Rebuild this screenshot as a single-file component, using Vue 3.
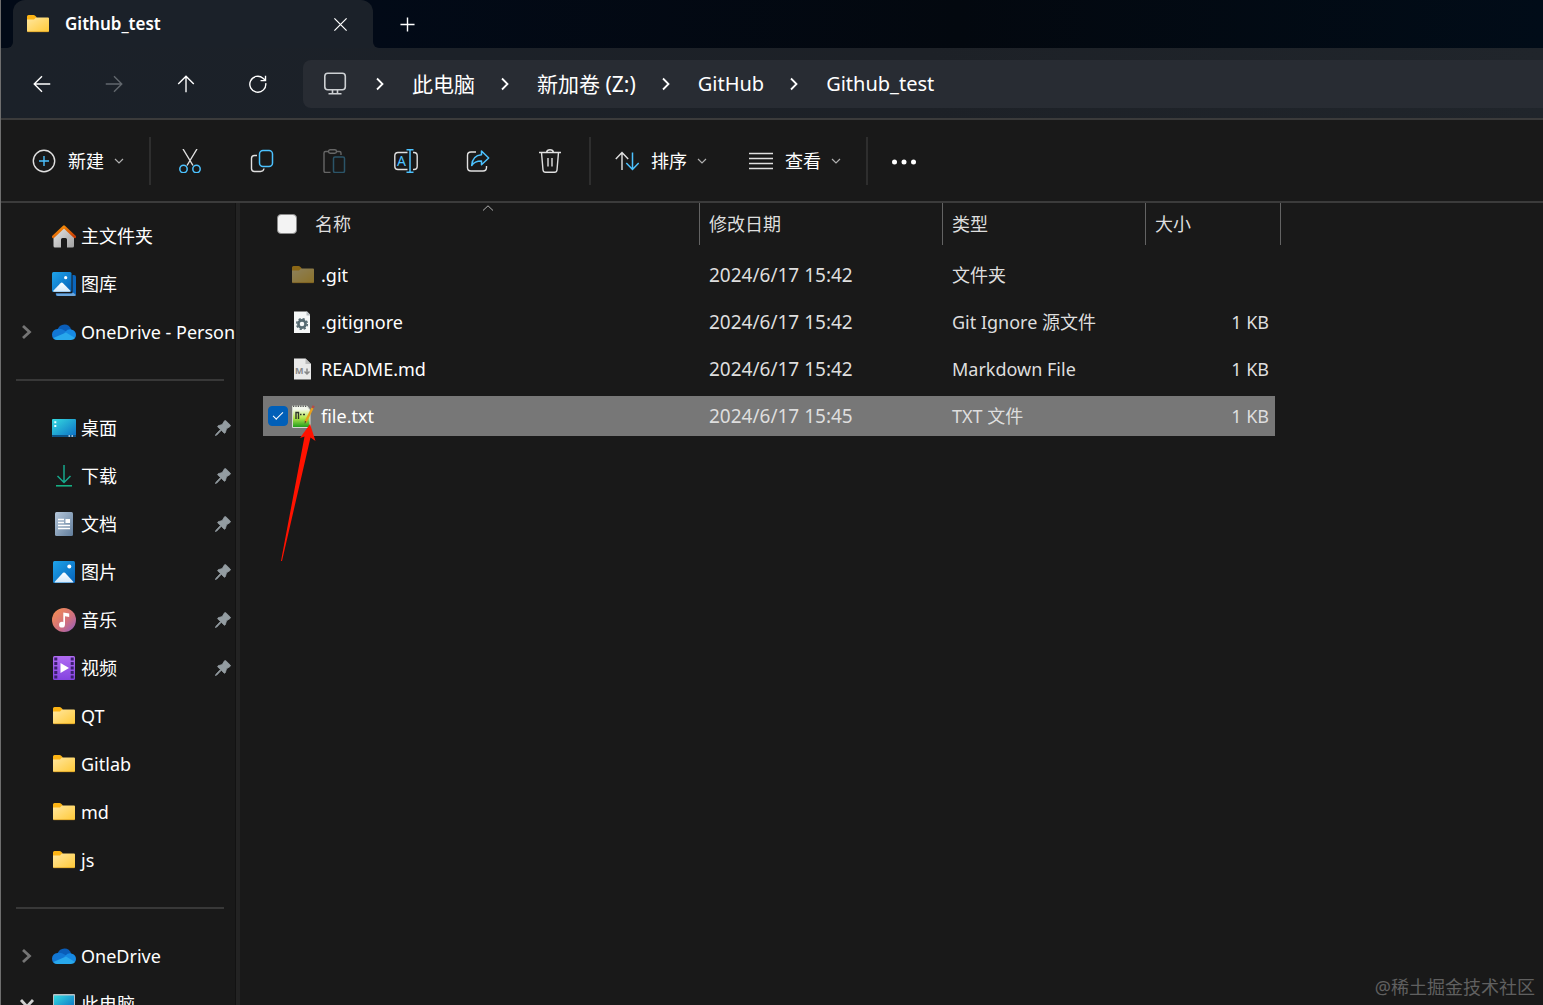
<template>
  <div class="explorer">
    <svg class="sprite" width="0" height="0" aria-hidden="true">
      <defs>
        <linearGradient id="g-folder" x1="0" y1="0" x2="1" y2="1">
          <stop offset="0" stop-color="#ffe7a0" />
          <stop offset="1" stop-color="#ffc937" />
        </linearGradient>
        <linearGradient id="g-roof" x1="0" y1="0" x2="1" y2="1">
          <stop offset="0" stop-color="#ff9d0a" />
          <stop offset="1" stop-color="#c93c05" />
        </linearGradient>
        <linearGradient id="g-wall" x1="0" y1="0" x2="1" y2="1">
          <stop offset="0" stop-color="#e6e6e6" />
          <stop offset="1" stop-color="#a2a2a2" />
        </linearGradient>
        <linearGradient id="g-blue" x1="0" y1="0" x2="1" y2="1">
          <stop offset="0" stop-color="#1fa4ea" />
          <stop offset="1" stop-color="#0561b8" />
        </linearGradient>
        <linearGradient id="g-snow" x1="0" y1="0" x2="0" y2="1">
          <stop offset="0" stop-color="#ffffff" />
          <stop offset="1" stop-color="#d2e9fb" />
        </linearGradient>
        <linearGradient id="g-desk" x1="0" y1="0" x2="1" y2="1">
          <stop offset="0" stop-color="#35dbe0" />
          <stop offset="1" stop-color="#0b6cc4" />
        </linearGradient>
        <linearGradient id="g-doc" x1="0" y1="0" x2="1" y2="1">
          <stop offset="0" stop-color="#b5c7da" />
          <stop offset="1" stop-color="#617d9b" />
        </linearGradient>
        <linearGradient id="g-music" x1="0" y1="0" x2="1" y2="1">
          <stop offset="0.1" stop-color="#f28b55" />
          <stop offset="0.6" stop-color="#cf6f80" />
          <stop offset="1" stop-color="#8e5cc4" />
        </linearGradient>
        <linearGradient id="g-video" x1="0" y1="0" x2="0" y2="1">
          <stop offset="0" stop-color="#b06cf2" />
          <stop offset="1" stop-color="#8443e0" />
        </linearGradient>
        <linearGradient id="g-note" x1="0" y1="0" x2="0" y2="1">
          <stop offset="0.15" stop-color="#f4f8ee" />
          <stop offset="0.55" stop-color="#b6e84c" />
          <stop offset="1" stop-color="#199a1a" />
        </linearGradient>
      </defs>

      <symbol id="i-folder" viewBox="0 0 24 24">
        <path d="M1 4.500Q1 3 2.500 3H7.500Q8.500 3 9.200 3.800L10.500 5V9H1Z" fill="#fcb414" />
        <path d="M1 7.500H8L10 5.500H22Q23 5.500 23 6.500V19Q23 20 22 20H2Q1 20 1 19Z" fill="url(#g-folder)" />
        <path d="M1.500 19.700H22.500" stroke="#d79b1e" stroke-width="0.700" />
      </symbol>
      <symbol id="i-home" viewBox="0 0 24 24">
        <path d="M12 3L22 12V22Q22 23.500 20.500 23.500H15V15.500Q15 14 13.500 14H10.500Q9 14 9 15.500V23.500H3Q1.500 23.500 1.500 22V12Z" fill="url(#g-wall)" />
        <path d="M1.300 12.700L12 2.800L22.700 12.700" fill="none" stroke="url(#g-roof)" stroke-width="2.800" stroke-linecap="round" stroke-linejoin="round" />
      </symbol>
      <symbol id="i-gallery" viewBox="0 0 24 24">
        <path d="M20.500 3H22Q24 3 24 5V22Q24 24 22 24H5Q4 24 3.500 21.500H19Q20.500 21.500 20.500 20Z" fill="#0b66bd" />
        <path d="M4 21.500H19Q20.500 21.500 21 20.500L24 23Q23.500 24 22 24H6Q4 24 4 21.500Z" fill="#6ca6dc" />
        <rect width="19.500" height="20" rx="1.500" fill="url(#g-blue)" />
        <path d="M1 19L8.500 11.200Q9.800 10 11 11.200L18.700 19Q18.200 19.800 17.500 19.800H2Q1.300 19.800 1 19Z" fill="url(#g-snow)" />
        <circle cx="13.700" cy="5.700" r="1.600" fill="#fff" />
      </symbol>
      <symbol id="i-cloud" viewBox="0 0 24 24">
        <path d="M5 10.500Q7 4.500 12.500 4.500Q17.500 4.500 19.300 9.700L12 14Z" fill="#0a5db8" />
        <path d="M5.500 9Q9 8 12.500 10.500L17 13L5 20Q0 19.500 0 14.500Q0.300 9.700 5.500 9Z" fill="#1277d4" />
        <path d="M13.500 11.500Q16 8.800 19.300 9.500Q24 10.500 24 15Q24 17 22.500 18.500L12 13Z" fill="#1689e2" />
        <path d="M1.300 18L14 12.500L23 18Q21.700 20 19 20H5Q2.500 20 1.300 18Z" fill="#28a8ec" />
      </symbol>
      <symbol id="i-desktop" viewBox="0 0 24 24">
        <rect y="3" width="24" height="18" rx="1" fill="url(#g-desk)" />
        <path d="M0 19H24V20Q24 21 23 21H1Q0 21 0 20Z" fill="#0d5488" />
        <path d="M2.300 5.200H4.300V7.200H2.300ZM2.300 9H4.300V11H2.300Z" fill="#e8ffff" />
        <path d="M16.500 19.200H18V20.700H16.500ZM19.500 19.200H21V20.700H19.500Z" fill="#cbe0f2" />
      </symbol>
      <symbol id="i-download" viewBox="0 0 24 24">
        <path d="M12 1V18.500M5.500 12L12 18.500L18.500 12" fill="none" stroke="#16a88c" stroke-width="1.500" />
        <path d="M4 21.800H20" stroke="#16b98a" stroke-width="1.500" />
      </symbol>
      <symbol id="i-document" viewBox="0 0 24 24">
        <rect x="3" width="18" height="24" rx="1.500" fill="url(#g-doc)" />
        <path d="M6 7.500H12M6 10.500H12M6 13.500H18M6 16.500H18" stroke="#fff" stroke-width="1.300" />
        <rect x="13.500" y="7" width="4.500" height="4" fill="#fff" />
      </symbol>
      <symbol id="i-picture" viewBox="0 0 24 24">
        <rect x="1" y="1" width="22" height="22" rx="1.500" fill="url(#g-blue)" />
        <path d="M2.500 22L11 12.800Q12 12 13 12.800L21.500 22Q21 22.600 20.500 22.600H3.500Q3 22.600 2.500 22Z" fill="url(#g-snow)" />
        <circle cx="17.300" cy="6.500" r="2" fill="#fff" />
      </symbol>
      <symbol id="i-music" viewBox="0 0 24 24">
        <circle cx="12" cy="12" r="12" fill="url(#g-music)" />
        <circle cx="10" cy="16.700" r="2.900" fill="#fff" />
        <path d="M11.300 4.500L17.200 5.500V9L13 8.200V16.700H11.300Z" fill="#fff" />
      </symbol>
      <symbol id="i-video" viewBox="0 0 24 24">
        <rect x="1" width="22" height="24" rx="1.500" fill="url(#g-video)" />
        <path d="M3.800 1.500V24M20.200 1.500V24" stroke="#3c1f70" stroke-width="3" stroke-dasharray="3 1.500" />
        <path d="M8.500 7L17 12L8.500 17Z" fill="#fff" />
      </symbol>
      <symbol id="i-computer" viewBox="0 0 24 24">
        <path d="M1 3Q1 2 2 2H22Q23 2 23 3V18H1Z" fill="#bac0c5" />
        <rect x="2" y="3.500" width="20" height="14" fill="url(#g-desk)" />
      </symbol>
      <symbol id="i-pin" viewBox="0 0 16 16">
        <path d="M9.500 0.800Q10.200 0.200 11 0.900L15.200 5Q15.900 5.800 15 6.500L11.500 8.800L10.300 12.700Q9.800 13.600 9 12.900L6.300 10.300L1.800 15L0.400 15.600L1 14.200L5.400 9.500L2.900 7Q2.300 6.100 3.200 5.700L7.200 4.600Z" fill="#939ca1" stroke="#939ca1" stroke-width="0.800" stroke-linejoin="round" />
      </symbol>

      <symbol id="i-config" viewBox="1 0 24 24">
        <path d="M4 1.500H17L20 4.500V23H4Z" fill="#f5f7f7" />
        <path d="M16.500 1.500V5.500H20V4.500L17 1.500Z" fill="#b8bec1" />
        <circle cx="12" cy="14" r="3.600" fill="none" stroke="#566a72" stroke-width="2.600" />
        <circle cx="12" cy="14" r="5.300" fill="none" stroke="#566a72" stroke-width="1.600" stroke-dasharray="2.200 1.960" />
      </symbol>
      <symbol id="i-markdown" viewBox="1 0 24 24">
        <path d="M4 1.500H15.500L21 7V22.500H4Z" fill="#e9e9e9" />
        <path d="M15.500 1.500V7H21Z" fill="#bcbcbc" />
        <path d="M17 11.500V17M14.500 14.500L17 17L19.500 14.500" fill="none" stroke="#888" stroke-width="1.500" />
      </symbol>
      <symbol id="i-notepad" viewBox="0 0 24 24">
        <path d="M1.500 2H16L19 6V23.500H1.500Z" fill="url(#g-note)" stroke="#d4dad0" stroke-width="1" />
        <path d="M2 2.200H16" stroke="#555" stroke-width="1.600" stroke-dasharray="1.200 1.200" />
        <path d="M5 15V8.500H7.500V15M9 10.500H10.500M12 10.500H14" fill="none" stroke="#2c3328" stroke-width="1.400" />
        <path d="M21.500 4L14.500 18" stroke="#e8a01e" stroke-width="2.400" />
        <path d="M22.700 1.700L21.500 4" stroke="#b44c46" stroke-width="2.400" />
        <path d="M15.500 17.500L13.700 20L13.800 16.800Z" fill="#5b4a2c" />
      </symbol>

      <symbol id="i-back" viewBox="0 0 24 24">
        <path d="M21 12H3.500M12 3.500L3.500 12L12 20.500" fill="none" stroke="currentColor" stroke-width="1.500" />
      </symbol>
      <symbol id="i-forward" viewBox="0 0 24 24">
        <path d="M3 12H20.500M12 3.500L20.500 12L12 20.500" fill="none" stroke="currentColor" stroke-width="1.500" />
      </symbol>
      <symbol id="i-up" viewBox="0 0 24 24">
        <path d="M12 21V3.500M3.500 12L12 3.500L20.500 12" fill="none" stroke="currentColor" stroke-width="1.500" />
      </symbol>
      <symbol id="i-refresh" viewBox="0 0 24 24">
        <path d="M20.400 11A8.700 8.700 0 1 1 17.500 5.700L20 8M20.200 3V8.300H14.800" fill="none" stroke="currentColor" stroke-width="1.500" />
      </symbol>
      <symbol id="i-close" viewBox="0 0 16 16">
        <path d="M1.500 1.500L14.500 14.500M14.500 1.500L1.500 14.500" fill="none" stroke="currentColor" stroke-width="1.300" />
      </symbol>
      <symbol id="i-plus" viewBox="0 0 16 16">
        <path d="M8 0.500V15.500M0.500 8H15.500" fill="none" stroke="currentColor" stroke-width="1.500" />
      </symbol>
      <symbol id="i-monitor" viewBox="0 0 24 24">
        <rect x="1.800" y="1.300" width="20.500" height="16.500" rx="3" fill="none" stroke="#cdd0d3" stroke-width="1.600" />
        <path d="M9.500 18V21M14.500 18V21M5.500 21.700H18.500" fill="none" stroke="#cdd0d3" stroke-width="1.600" />
      </symbol>
      <symbol id="i-chevron" viewBox="0 0 10 14">
        <path d="M2 1.500L7.500 7L2 12.500" fill="none" stroke="currentColor" stroke-width="1.800" />
      </symbol>
      <symbol id="i-chevron-bold" viewBox="0 0 12 16">
        <path d="M2 2L8.500 8L2 14" fill="none" stroke="currentColor" stroke-width="2.800" />
      </symbol>
      <symbol id="i-down" viewBox="0 0 10 10">
        <path d="M1 3L5 7L9 3" fill="none" stroke="#b0b0b0" stroke-width="1.200" />
      </symbol>

      <symbol id="i-new" viewBox="0 0 24 24">
        <circle cx="12" cy="12" r="10.700" fill="none" stroke="#e0e0e0" stroke-width="1.400" />
        <path d="M12 7V17M7 12H17" stroke="#4cc2ff" stroke-width="1.400" />
      </symbol>
      <symbol id="i-cut" viewBox="0 0 24 24">
        <path d="M5 0L15 16.500M19 0L9 16.500" fill="none" stroke="#e0e0e0" stroke-width="1.400" />
        <circle cx="5.500" cy="20" r="3.700" fill="none" stroke="#4cc2ff" stroke-width="1.500" />
        <circle cx="18.500" cy="20" r="3.700" fill="none" stroke="#4cc2ff" stroke-width="1.500" />
      </symbol>
      <symbol id="i-copy" viewBox="0 0 24 24">
        <path d="M7 6.500H4.500Q1.500 6.500 1.500 9.500V19.500Q1.500 22.500 4.500 22.500H10.500Q13.500 22.500 14 19.500" fill="none" stroke="#e0e0e0" stroke-width="1.400" />
        <rect x="9.500" y="1.500" width="13" height="16" rx="3.500" fill="none" stroke="#4cc2ff" stroke-width="1.500" />
      </symbol>
      <symbol id="i-paste" viewBox="0 0 24 24">
        <path d="M6.500 2.500H3.500Q2 2.500 2 4V22Q2 23.500 3.500 23.500H8.500M14 2.500H17.500Q19 2.500 19 4V6" fill="none" stroke="#666" stroke-width="1.400" />
        <rect x="6.500" y="0.800" width="8" height="3.400" rx="1.700" fill="none" stroke="#666" stroke-width="1.400" />
        <rect x="11.500" y="8" width="11" height="15.500" rx="1.500" fill="none" stroke="#2b5468" stroke-width="1.500" />
      </symbol>
      <symbol id="i-rename" viewBox="0 0 24 24">
        <path d="M13.500 3.500H4Q0.800 3.500 0.800 6.700V17.300Q0.800 20.500 4 20.500H13.500M19 3.500H20Q23.200 3.500 23.200 6.700V17.300Q23.200 20.500 20 20.500H19" fill="none" stroke="#e0e0e0" stroke-width="1.400" />
        <path d="M12.500 0.800H19.500M12.500 23.200H19.500M16 0.800V23.200" fill="none" stroke="#4cc2ff" stroke-width="1.500" />
      </symbol>
      <symbol id="i-share" viewBox="0 0 24 24">
        <path d="M10 3H5Q1.500 3 1.500 6.500V18.500Q1.500 22 5 22H17Q20.500 22 20.500 18.500V17" fill="none" stroke="#e0e0e0" stroke-width="1.400" />
        <path d="M15.500 2L22.700 9L15.500 15.700V12Q9 11.800 5.700 16.500Q6.500 6.500 15.500 5.800Z" fill="none" stroke="#4cc2ff" stroke-width="1.500" stroke-linejoin="round" />
      </symbol>
      <symbol id="i-delete" viewBox="0 0 24 24">
        <path d="M1 3.500H23M8.500 3.500Q9 0.800 12 0.800Q15 0.800 15.500 3.500M3.500 3.500L5 21Q5.300 23.300 7.500 23.300H16.500Q18.700 23.300 19 21L20.500 3.500M10 9V17.500M14 9V17.500" fill="none" stroke="#e0e0e0" stroke-width="1.400" />
      </symbol>
      <symbol id="i-sort" viewBox="0 0 24 24">
        <path d="M7 21V3.500M0.800 10L7 3.500L13.200 10" fill="none" stroke="#e0e0e0" stroke-width="1.400" />
        <path d="M17.500 3.500V20.500M11.300 14L17.500 20.500L23.700 14" fill="none" stroke="#4cc2ff" stroke-width="1.500" />
      </symbol>
      <symbol id="i-view" viewBox="0 0 24 24">
        <path d="M0 4.500H24M0 9.500H24M0 14.500H24M0 19.500H24" stroke="#e0e0e0" stroke-width="1.300" />
      </symbol>
      <symbol id="i-more" viewBox="0 0 24 24">
        <circle cx="2.500" cy="13" r="2.500" fill="#fff" />
        <circle cx="12" cy="13" r="2.500" fill="#fff" />
        <circle cx="21.500" cy="13" r="2.500" fill="#fff" />
      </symbol>
    </svg>

    <header class="top">
      <div class="tab-strip">
        <div class="strip-start"></div>
        <div class="tab-slot">
          <div class="tab">
            <svg class="icon"><use href="#i-folder" /></svg>
            <span class="tab-title">Github_test</span>
            <button class="tab-button" aria-label="关闭标签页">
              <svg class="icon-small"><use href="#i-close" /></svg>
            </button>
          </div>
        </div>
        <div class="strip-end">
          <button class="tab-button" aria-label="新建标签页">
            <svg class="icon-small"><use href="#i-plus" /></svg>
          </button>
        </div>
      </div>

      <div class="nav-bar">
        <button
          v-for="item in navButtons"
          :key="item.icon"
          class="square-button"
          :disabled="item.disabled"
          :aria-label="item.label"
        >
          <svg class="icon-nav"><use :href="`#i-${item.icon}`" /></svg>
        </button>
        <nav class="address">
          <svg class="icon"><use href="#i-monitor" /></svg>
          <template v-for="crumb in crumbs" :key="crumb.name">
            <svg class="crumb-arrow"><use href="#i-chevron" /></svg>
            <a class="crumb" :class="{ drive: crumb.drive }" href="#">{{ crumb.name }}</a>
          </template>
        </nav>
      </div>
    </header>

    <div class="toolbar">
      <button class="menu-button">
        <svg class="icon"><use href="#i-new" /></svg>
        <span>新建</span>
        <svg class="icon-down"><use href="#i-down" /></svg>
      </button>
      <div class="divider"></div>
      <div class="actions">
        <button v-for="item in actions" :key="item.icon" class="square-button" :aria-label="item.label">
          <svg class="icon">
            <use :href="`#i-${item.icon}`" />
            <text v-if="item.letter" class="rename-letter" x="3" y="17">{{ item.letter }}</text>
          </svg>
        </button>
      </div>
      <div class="divider"></div>
      <div class="menus">
        <button class="menu-button">
          <svg class="icon"><use href="#i-sort" /></svg>
          <span>排序</span>
          <svg class="icon-down"><use href="#i-down" /></svg>
        </button>
        <button class="menu-button">
          <svg class="icon"><use href="#i-view" /></svg>
          <span>查看</span>
          <svg class="icon-down"><use href="#i-down" /></svg>
        </button>
      </div>
      <div class="divider"></div>
      <button class="menu-button more" aria-label="更多">
        <svg class="icon"><use href="#i-more" /></svg>
      </button>
    </div>

    <div class="body">
      <aside class="sidebar">
        <div v-for="(group, index) in groups" :key="index" class="group">
          <a v-for="item in group" :key="item.name" class="side-item" href="#">
            <span class="expander" :class="{ open: item.open }">
              <svg v-if="item.expandable"><use href="#i-chevron-bold" /></svg>
            </span>
            <svg class="icon"><use :href="`#i-${item.icon}`" /></svg>
            <span class="side-name">{{ item.name }}</span>
            <svg v-if="item.pinned" class="pin"><use href="#i-pin" /></svg>
          </a>
        </div>
      </aside>

      <main class="content">
        <table class="files">
          <colgroup>
            <col class="col-name">
            <col class="col-date">
            <col class="col-type">
            <col class="col-size">
          </colgroup>
          <thead>
            <tr>
              <th>
                <div class="head head-name">
                  <input type="checkbox" class="check" aria-label="全选">
                  <span>名称</span>
                  <svg class="sort-mark" viewBox="0 0 12 6">
                    <path d="M1 5.500L6 0.800L11 5.500" fill="none" stroke="#b0b0b0" />
                  </svg>
                </div>
              </th>
              <th><div class="head">修改日期</div></th>
              <th><div class="head">类型</div></th>
              <th><div class="head">大小</div></th>
            </tr>
          </thead>
          <tbody>
            <tr v-for="file in files" :key="file.name" :class="{ selected: selected.includes(file.name) }">
              <td>
                <label class="file">
                  <input v-model="selected" type="checkbox" class="check" :value="file.name">
                  <svg class="file-icon" :class="{ faded: file.hidden }">
                    <use :href="`#i-${file.icon}`" />
                    <text v-if="file.letter" class="file-letter" x="4" y="17">{{ file.letter }}</text>
                  </svg>
                  <span>{{ file.name }}</span>
                </label>
              </td>
              <td class="date">{{ file.date }}</td>
              <td class="type">{{ file.type }}</td>
              <td class="size">{{ file.size }}</td>
            </tr>
          </tbody>
        </table>
      </main>
    </div>

    <svg class="pointer" viewBox="0 0 36 138" aria-hidden="true">
      <path d="M30 1L20 15L24.500 13.500L1 138H2L30.500 14.500L35.500 18Z" fill="#ff1200" />
    </svg>
    <div class="watermark">@稀土掘金技术社区</div>
  </div>
</template>

<script setup>
import { ref } from 'vue'

const navButtons = [
  { icon: 'back', label: '后退' },
  { icon: 'forward', label: '前进', disabled: true },
  { icon: 'up', label: '向上' },
  { icon: 'refresh', label: '刷新' }
]

const crumbs = [
  { name: '此电脑', drive: true },
  { name: '新加卷 (Z:)', drive: true },
  { name: 'GitHub' },
  { name: 'Github_test' }
]

const actions = [
  { icon: 'cut', label: '剪切' },
  { icon: 'copy', label: '复制' },
  { icon: 'paste', label: '粘贴' },
  { icon: 'rename', label: '重命名', letter: 'A' },
  { icon: 'share', label: '共享' },
  { icon: 'delete', label: '删除' }
]

const groups = [
  [
    { name: '主文件夹', icon: 'home' },
    { name: '图库', icon: 'gallery' },
    { name: 'OneDrive - Personal', icon: 'cloud', expandable: true }
  ],
  [
    { name: '桌面', icon: 'desktop', pinned: true },
    { name: '下载', icon: 'download', pinned: true },
    { name: '文档', icon: 'document', pinned: true },
    { name: '图片', icon: 'picture', pinned: true },
    { name: '音乐', icon: 'music', pinned: true },
    { name: '视频', icon: 'video', pinned: true },
    { name: 'QT', icon: 'folder' },
    { name: 'Gitlab', icon: 'folder' },
    { name: 'md', icon: 'folder' },
    { name: 'js', icon: 'folder' }
  ],
  [
    { name: 'OneDrive', icon: 'cloud', expandable: true },
    { name: '此电脑', icon: 'computer', expandable: true, open: true }
  ]
]

const files = [
  { name: '.git', icon: 'folder', date: '2024/6/17 15:42', type: '文件夹', size: '', hidden: true },
  { name: '.gitignore', icon: 'config', date: '2024/6/17 15:42', type: 'Git Ignore 源文件', size: '1 KB' },
  { name: 'README.md', icon: 'markdown', letter: 'M', date: '2024/6/17 15:42', type: 'Markdown File', size: '1 KB' },
  { name: 'file.txt', icon: 'notepad', date: '2024/6/17 15:45', type: 'TXT 文件', size: '1 KB' }
]

const selected = ref(['file.txt'])
</script>

<style>
body {
  background: #191919;
}
</style>

<style scoped>
.explorer {
  position: relative;
  display: flex;
  flex-direction: column;
  height: 100vh;
  box-sizing: border-box;
  overflow: hidden;
  border-left: 1px solid #6e6e6e;
  background: #191919;
  color: #fff;
  font-family: "Noto Sans", "Noto Sans CJK SC", sans-serif;
  font-size: 18px;
  line-height: 24px;
}

.sprite {
  position: absolute;
}

button {
  display: flex;
  align-items: center;
  justify-content: center;
  padding: 0;
  border: 0;
  background: none;
  color: inherit;
  font: inherit;
}

a {
  color: inherit;
  text-decoration: none;
}

svg {
  flex-shrink: 0;
}

.icon {
  width: 24px;
  height: 24px;
}

.icon-nav {
  width: 22px;
  height: 22px;
}

.icon-small {
  width: 15px;
  height: 15px;
}

.icon-down {
  width: 10px;
  height: 10px;
  margin-left: -2px;
}

/* Tabs */
.top {
  border-bottom: 2px solid #3b3b3b;
  background: linear-gradient(90deg, #1b2129, #1d2127 60%, #20252b);
}

.tab-strip {
  display: flex;
  height: 48px;
}

.strip-start {
  width: 12px;
  border-bottom-right-radius: 6px;
  background: #020a17;
}

.tab-slot {
  width: 360px;
  background: #020a17;
}

.tab {
  display: flex;
  align-items: center;
  height: 48px;
  box-sizing: border-box;
  padding: 0 17px 0 13px;
  border-radius: 12px 12px 0 0;
  background: #1b2129;
}

.tab-title {
  flex: 1;
  margin-left: 15px;
  font-weight: 600;
  font-size: 17px;
}

.tab-button {
  width: 32px;
  height: 32px;
}

.strip-end {
  display: flex;
  flex: 1;
  align-items: center;
  padding-left: 18px;
  border-bottom-left-radius: 6px;
  background: linear-gradient(90deg, #020a17, #03080f 50%, #010c18);
}

/* Navigation */
.nav-bar {
  display: flex;
  align-items: center;
  height: 70px;
  box-sizing: border-box;
  padding: 2px 0 0 5px;
}

.square-button {
  width: 72px;
  height: 48px;
}

.square-button:disabled {
  color: #62676d;
}

.address {
  display: flex;
  flex: 1;
  align-items: center;
  height: 48px;
  margin-left: 9px;
  padding-left: 20px;
  border-radius: 8px 0 0 8px;
  background: #282c33;
}

.address .icon {
  margin-right: 3px;
}

.crumb-arrow {
  width: 10px;
  height: 14px;
  margin: 0 27px 0 25px;
}

.crumb {
  font-size: 20px;
}

.crumb.drive {
  font-size: 21px;
}

/* Toolbar */
.toolbar {
  display: flex;
  align-items: center;
  height: 81px;
  padding-left: 31px;
  border-bottom: 2px solid #3b3b3b;
}

.menu-button {
  gap: 12px;
  height: 48px;
}

.divider {
  width: 2px;
  height: 48px;
  margin-left: 25px;
  background: #2e2e2e;
}

.actions {
  display: flex;
  margin: 0 -22px 0 3px;
}

.rename-letter {
  fill: #4cc2ff;
  font-size: 14px;
}

.menus {
  display: flex;
  gap: 42px;
  margin-left: 24px;
}

.more {
  margin-left: 24px;
}

/* Sidebar */
.body {
  display: flex;
  flex: 1;
  min-height: 0;
}

.sidebar {
  width: 235px;
  flex-shrink: 0;
  box-sizing: border-box;
  padding-top: 9px;
  overflow: hidden;
  border-right: 1px solid #121212;
}

.group + .group::before {
  content: "";
  display: block;
  height: 2px;
  margin: 23px 11px 23px 15px;
  background: #383838;
}

.side-item {
  display: flex;
  align-items: center;
  height: 48px;
  padding-right: 4px;
}

.expander {
  display: flex;
  width: 12px;
  margin: 0 19px 0 20px;
  color: #757575;
}

.expander svg {
  width: 12px;
  height: 16px;
}

.expander.open {
  color: #d0d0d0;
  transform: rotate(90deg);
}

.side-name {
  flex: 1;
  margin-left: 5px;
  white-space: nowrap;
}

.pin {
  width: 16px;
  height: 16px;
}

/* Files */
.content {
  flex: 1;
  padding-left: 23px;
  border-left: 4px solid #232323;
}

.files {
  width: 1018px;
  table-layout: fixed;
  border-spacing: 0;
}

.col-name {
  width: 437px;
}

.col-date {
  width: 243px;
}

.col-type {
  width: 203px;
}

.col-size {
  width: 135px;
}

th {
  padding: 0 0 7px;
  color: #dedede;
  font-weight: 400;
  text-align: left;
}

.head {
  display: flex;
  align-items: center;
  height: 42px;
  padding-left: 9px;
  border-right: 1px solid #636363;
}

.head-name {
  position: relative;
  gap: 18px;
  padding-left: 14px;
}

.sort-mark {
  position: absolute;
  top: 2px;
  left: 219px;
  width: 12px;
  height: 6px;
}

td {
  height: 40px;
  padding: 0 0 0 9px;
  border: solid transparent;
  border-width: 3px 0 4px;
  background-clip: padding-box;
  color: #dedede;
}

td:first-child {
  padding-left: 5px;
  color: #fff;
}

td:last-child {
  padding-right: 6px;
  border-right-width: 6px;
  text-align: right;
}

.selected td {
  background-color: #777;
}

.date {
  font-size: 19px;
}

.file {
  display: flex;
  align-items: center;
}

.file-icon {
  width: 24px;
  height: 24px;
  margin: 0 6px 0 3px;
}

.file-letter {
  fill: #888;
  font-size: 9px;
  font-weight: 700;
}

.faded {
  opacity: 0.5;
}

.check {
  appearance: none;
  display: grid;
  place-items: center;
  width: 20px;
  height: 20px;
  margin: 0;
  border: 1px solid #8a8a8a;
  border-radius: 4px;
  background: #f3f3f3;
}

.check:checked {
  border-color: #005fb8;
  background: #005fb8;
}

.check:checked::before {
  content: "";
  width: 9px;
  height: 4px;
  margin-bottom: 4px;
  border: solid #fff;
  border-width: 0 0 1px 1px;
  transform: rotate(-45deg);
}

.file .check:not(:checked) {
  opacity: 0;
}

.pointer {
  position: absolute;
  top: 423px;
  left: 279px;
  width: 36px;
  height: 138px;
}

.watermark {
  position: absolute;
  right: 8px;
  bottom: 6px;
  color: #606060;
}
</style>
